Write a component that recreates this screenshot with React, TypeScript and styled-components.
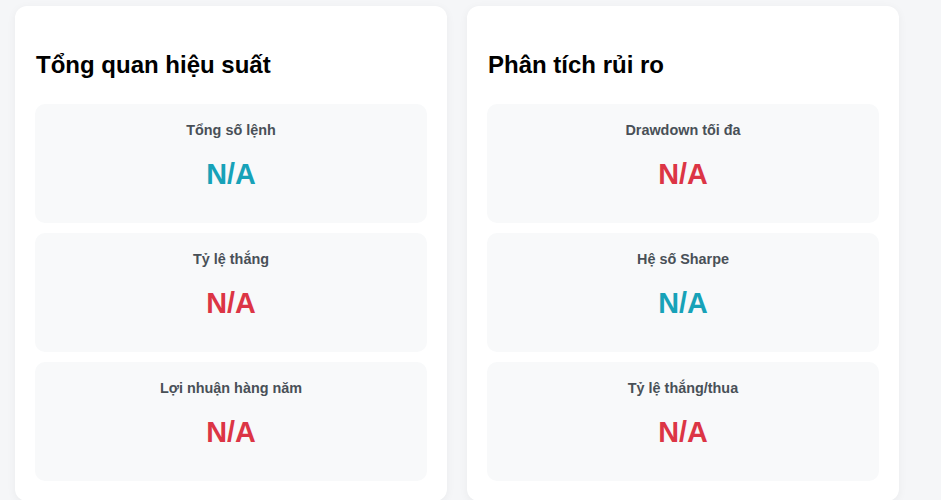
import React from "react";
import styled, { createGlobalStyle } from "styled-components";

const Global = createGlobalStyle`
  html, body {
    margin: 0;
    padding: 0;
    background: #f5f6f8;
    font-family: "Liberation Sans", Arial, sans-serif;
  }
`;

const Page = styled.div`
  display: grid;
  grid-template-columns: 432px 432px;
  gap: 20px;
  padding: 6px 15px 20px;
  align-items: start;
`;

const Card = styled.section`
  background: #ffffff;
  border-radius: 12px;
  box-shadow: 0 2px 10px rgba(0, 0, 0, 0.05);
  padding: 20px;
`;

const Title = styled.h2`
  margin: 25px 0 25px 1px;
  font-size: 24px;
  line-height: 28px;
  font-weight: 700;
  color: #000;
`;

const List = styled.div`
  display: flex;
  flex-direction: column;
  gap: 10px;
`;

const Metric = styled.div`
  background: #f8f9fa;
  border-radius: 10px;
  padding: 18px 20px 32px;
  text-align: center;
`;

const Label = styled.div`
  font-size: 14.4px;
  line-height: 17px;
  font-weight: 700;
  color: #495057;
  margin-bottom: 18px;
`;

const Value = styled.div<{ $tone: "teal" | "red" }>`
  font-size: 28.8px;
  line-height: 34px;
  font-weight: 700;
  color: ${(p) => (p.$tone === "teal" ? "#17a2b8" : "#dc3545")};
`;

type Item = { label: string; tone: "teal" | "red" };

const sections: { title: string; items: Item[] }[] = [
  {
    title: "Tổng quan hiệu suất",
    items: [
      { label: "Tổng số lệnh", tone: "teal" },
      { label: "Tỷ lệ thắng", tone: "red" },
      { label: "Lợi nhuận hàng năm", tone: "red" },
    ],
  },
  {
    title: "Phân tích rủi ro",
    items: [
      { label: "Drawdown tối đa", tone: "red" },
      { label: "Hệ số Sharpe", tone: "teal" },
      { label: "Tỷ lệ thắng/thua", tone: "red" },
    ],
  },
];

export default function App() {
  return (
    <>
      <Global />
      <Page>
        {sections.map((s) => (
          <Card key={s.title}>
            <Title>{s.title}</Title>
            <List>
              {s.items.map((it) => (
                <Metric key={it.label}>
                  <Label>{it.label}</Label>
                  <Value $tone={it.tone}>N/A</Value>
                </Metric>
              ))}
            </List>
          </Card>
        ))}
      </Page>
    </>
  );
}
